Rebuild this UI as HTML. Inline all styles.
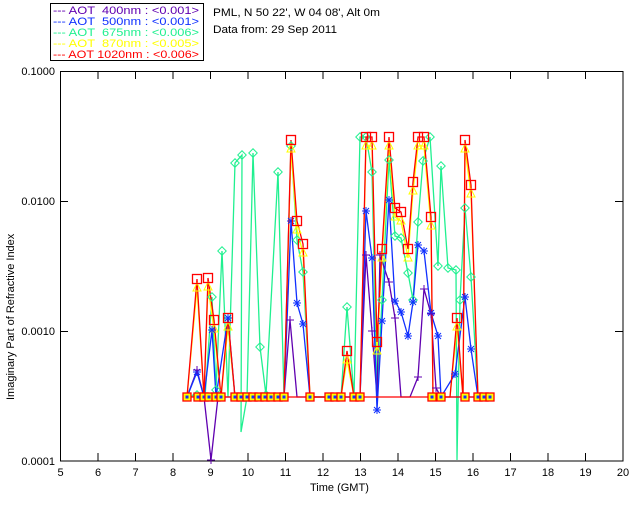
<!DOCTYPE html>
<html><head><meta charset="utf-8"><style>
html,body{margin:0;padding:0;background:#fff;}
svg{display:block;font-family:"Liberation Sans",sans-serif;}
</style></head><body>
<svg id="s" width="640" height="512" viewBox="0 0 640 512" xmlns="http://www.w3.org/2000/svg">
<rect x="0" y="0" width="640" height="512" fill="#fff"/>
<rect x="50.5" y="3.5" width="153" height="57" fill="#fff" stroke="#000"/>
<g font-size="11">
<text x="53" y="14" fill="#6000b0" textLength="146" lengthAdjust="spacingAndGlyphs">--- AOT &#160;400nm : &lt;0.001&gt;</text>
<text x="53" y="25" fill="#1030ff" textLength="146" lengthAdjust="spacingAndGlyphs">--- AOT &#160;500nm : &lt;0.001&gt;</text>
<text x="53" y="36" fill="#20f090" textLength="146" lengthAdjust="spacingAndGlyphs">--- AOT &#160;675nm : &lt;0.006&gt;</text>
<text x="53" y="47" fill="#ffff00" textLength="146" lengthAdjust="spacingAndGlyphs">--- AOT &#160;870nm : &lt;0.005&gt;</text>
<text x="53" y="58" fill="#ff0000" textLength="146" lengthAdjust="spacingAndGlyphs">--- AOT 1020nm : &lt;0.006&gt;</text>
<text x="213" y="16" fill="#000" textLength="167" lengthAdjust="spacingAndGlyphs">PML, N 50 22', W 04 08', Alt 0m</text>
<text x="213" y="33" fill="#000" textLength="124" lengthAdjust="spacingAndGlyphs">Data from: 29 Sep 2011</text>
<text x="55" y="75" text-anchor="end">0.1000</text>
<text x="55" y="205" text-anchor="end">0.0100</text>
<text x="55" y="335" text-anchor="end">0.0010</text>
<text x="55" y="465" text-anchor="end">0.0001</text>
<text x="310" y="491">Time (GMT)</text>
<text transform="translate(14,400) rotate(-90)">Imaginary Part of Refractive Index</text>
</g>
<g id="ax" stroke="#000" fill="none"></g>
<g id="data" fill="none"></g>
</svg>
<script>
var ns="http://www.w3.org/2000/svg",s=document.getElementById('s'),ax=document.getElementById('ax'),dg=document.getElementById('data');
function el(p,t,a){var e=document.createElementNS(ns,t);for(var k in a)e.setAttribute(k,a[k]);p.appendChild(e);return e;}
el(ax,'rect',{x:60.5,y:71.5,width:562.5,height:389.5,'stroke-width':1});
for(var h=5;h<=20;h++){var x=60.5+37.5*(h-5);
 el(ax,'line',{x1:x,y1:461,x2:x,y2:453});el(ax,'line',{x1:x,y1:71,x2:x,y2:79});
 var t=el(s,'text',{x:x,y:476,'text-anchor':'middle','font-size':11});t.textContent=h;}
[201,331].forEach(function(y){el(ax,'line',{x1:60,y1:y+0.5,x2:68,y2:y+0.5});el(ax,'line',{x1:623,y1:y+0.5,x2:615,y2:y+0.5});});
function P(a){var r=[];for(var i=0;i<a.length;i+=2)r.push([a[i],a[i+1]]);return r;}
var base=[187,198,204,209,216,221,235,241,247,253,259,265,271,278,284,310,329,335,341,354,360,432,441,465,478,484,490];
var green=P([187,397,197,395,205,397,212,297,216,390,222,251,228,397,235,163,242,155,241,432,247,397,253,153,260,347,266,395,278,172,284,397,291,146,297,240,303,272,310,397,335,397,341,397,347,307,354,397,360,137,366,137,372,172,377,397,382,300,389,160,395,236,401,238,408,273,413,300,418,222,423,161,430,137,438,266,441,166,448,268,456,270,457,460,460,300,465,208,471,277,478,397,490,397]);
var red=P([187,397,197,279,204,397,208,278,214,320,221,397,228,318,235,397,284,397,291,140,297,221,303,244,310,397,341,397,347,351,354,397,360,397,366,137,372,137,377,342,382,249,389,137,395,208,401,212,408,249,413,182,418,137,424,137,431,217,433,397,450,397,457,318,463,397,465,140,471,185,478,397,490,397]);
var yel=red.map(function(p){return [p[0],p[1]>=397?397:p[1]+9];});
var purple=P([187,397,197,370,204,397,211,460,218,397,284,397,290,320,297,397,335,397,360,397,366,255,372,331,377,397,380,255,389,282,395,318,401,397,410,397,418,377,424,289,431,314,436,388,441,397,457,397,478,397]);
var blue=P([187,397,197,372,204,397,212,330,216,397,228,318,235,397,284,397,291,221,297,303,303,324,310,397,360,397,366,211,372,258,377,410,382,321,389,200,395,301,401,312,408,336,413,302,418,245,424,251,431,313,438,336,441,397,455,374,465,297,471,349,478,397]);
function line(pts,c){el(dg,'polyline',{points:pts.map(function(p){return p.join(',')}).join(' '),stroke:c,'stroke-width':1.3});}
line(green,'#20f090');line(purple,'#6000b0');line(yel,'#ffff00');line(blue,'#1030ff');line(red,'#ff0000');
green.forEach(function(p){if(p[1]<396)el(dg,'rect',{x:p[0]-3,y:p[1]-3,width:6,height:6,transform:'rotate(45 '+p[0]+' '+p[1]+')',stroke:'#20f090'});});
yel.forEach(function(p){if(p[1]<396)el(dg,'path',{d:'M'+p[0]+' '+(p[1]-5)+'l4 8h-8z',stroke:'#ffff00'});});
blue.forEach(function(p){if(p[1]!=397){var x=p[0],y=p[1];el(dg,'path',{d:'M'+(x-4)+' '+y+'h8M'+x+' '+(y-4)+'v8M'+(x-3)+' '+(y-3)+'l6 6M'+(x+3)+' '+(y-3)+'l-6 6',stroke:'#1030ff'});}});
purple.forEach(function(p){if(p[1]!=397){var x=p[0],y=p[1];el(dg,'path',{d:'M'+(x-4)+' '+y+'h8M'+x+' '+(y-4)+'v8',stroke:'#6000b0'});}});
red.forEach(function(p){if(p[1]<396)el(dg,'rect',{x:p[0]-4.5,y:p[1]-4.5,width:9,height:9,stroke:'#ff0000','stroke-width':1.3});});
el(dg,'line',{x1:183,y1:397,x2:493,y2:397,stroke:'#ff0000','stroke-width':1.3});
base.forEach(function(x){el(dg,'rect',{x:x-4,y:393,width:8,height:8,fill:'#ffff00',stroke:'#ff0000','stroke-width':1.3});el(dg,'rect',{x:x-1.5,y:395.5,width:3,height:3,fill:'#1030ff'});});
</script>
</body></html>
